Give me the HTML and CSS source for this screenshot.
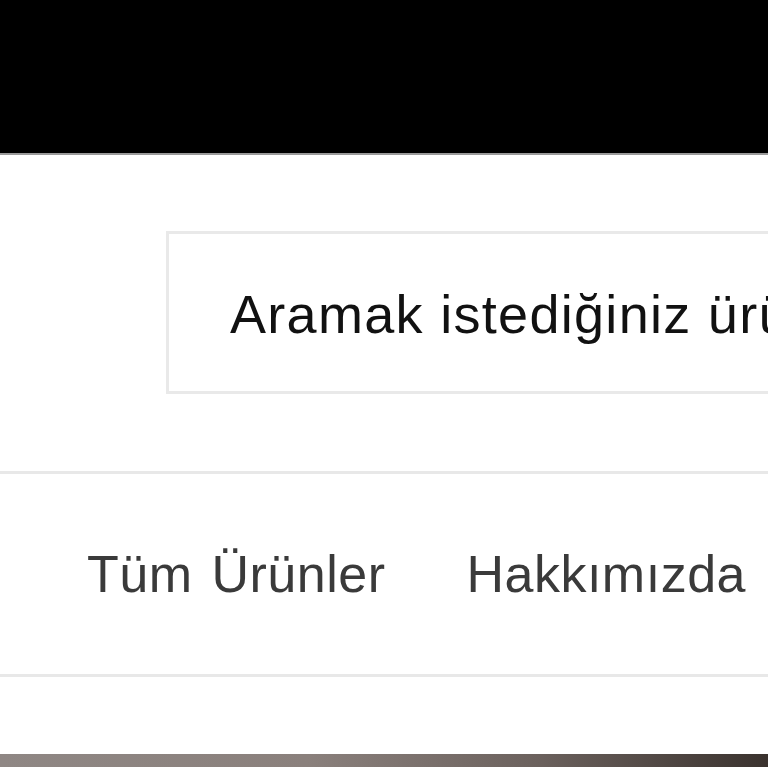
FILE: index.html
```html
<!DOCTYPE html>
<html lang="tr">
<head>
  <meta charset="UTF-8" />
  <meta name="viewport" content="width=device-width, initial-scale=1.0"/>
  <title>Mağaza</title>
  <link rel="stylesheet" href="styles.css">
</head>
<body>

  <div class="ust-bar"></div>

  <div class="arama-alani">
    <div class="arama-kutu">
      <span class="arama-yazi">Aramak istediğiniz ürünü yazınız</span>
    </div>
  </div>

  <nav class="menu">
    <a href="#">Tüm Ürünler</a>
    <a href="#">Hakkımızda</a>
  </nav>

  <div class="bosluk"></div>
  <div class="alt-serit"></div>

</body>
</html>
```

FILE: styles.css
```css
body {
  margin: 0;
  height: 768px;
  overflow: hidden;
  background: #fff;
  font-family: 'Liberation Sans', Arial, sans-serif;
}

.ust-bar {
  height: 153px;
  background: #000;
  border-bottom: 2px solid #9a9a9a;
}

.arama-alani {
  padding: 76px 0 77px 166px;
}

.arama-kutu {
  width: 800px;
  height: 157px;
  border: 3px solid #e9e9e9;
  display: flex;
  align-items: center;
  padding-left: 61px;
  white-space: nowrap;
  overflow: hidden;
}

.arama-yazi {
  font-size: 54px;
  letter-spacing: 1.3px;
  color: #111;
  margin-top: 2px;
}

.menu {
  height: 200px;
  border-top: 3px solid #e8e8e8;
  border-bottom: 3px solid #e8e8e8;
  display: flex;
  align-items: center;
  gap: 81px;
  padding-left: 87px;
  white-space: nowrap;
}

.menu a {
  font-size: 52px;
  letter-spacing: 0.5px;
  word-spacing: 4px;
  color: #3a3a3a;
  text-decoration: none;
}

.bosluk {
  height: 77px;
}

.alt-serit {
  height: 13px;
  background: linear-gradient(to right, #8f8784, #8a807c 40%, #6b615d 70%, #3a322e);
}
```
